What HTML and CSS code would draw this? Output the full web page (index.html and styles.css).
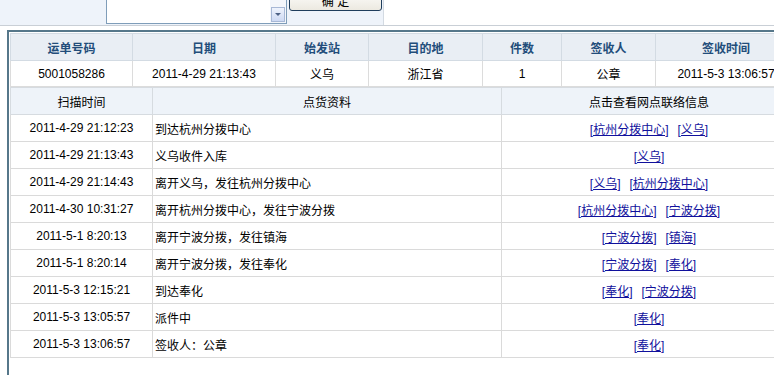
FILE: index.html
```html
<!DOCTYPE html>
<html lang="zh-CN">
<head>
<meta charset="utf-8">
<title>运单查询</title>
<link rel="stylesheet" href="styles.css">
</head>
<body>
<div class="topbar">
  <div class="formcell">
    <div class="memo">
      <div class="scroll"><div class="scroll-btn"><span class="arrow"></span></div></div>
    </div>
    <button class="okbtn" type="button">确 定</button>
  </div>
  <div class="restcell"></div>
</div>
<div class="panel">
  <table class="summary">
    <colgroup>
      <col class="w122"><col class="w143"><col class="w93"><col class="w114"><col class="w79"><col class="w94"><col class="w141">
    </colgroup>
    <tr>
      <th>运单号码</th><th>日期</th><th>始发站</th><th>目的地</th><th>件数</th><th>签收人</th><th>签收时间</th>
    </tr>
    <tr>
      <td>5001058286</td><td>2011-4-29 21:13:43</td><td>义乌</td><td>浙江省</td><td>1</td><td>公章</td><td>2011-5-3 13:06:57</td>
    </tr>
  </table>
  <table class="scans">
    <colgroup>
      <col class="w142"><col class="w349"><col class="w295">
    </colgroup>
    <tr><th>扫描时间</th><th>点货资料</th><th>点击查看网点联络信息</th></tr>
    <tr><td>2011-4-29 21:12:23</td><td class="info">到达杭州分拨中心</td><td class="links"><a href="#">[杭州分拨中心]</a><a href="#">[义乌]</a></td></tr>
    <tr><td>2011-4-29 21:13:43</td><td class="info">义乌收件入库</td><td class="links"><a href="#">[义乌]</a></td></tr>
    <tr><td>2011-4-29 21:14:43</td><td class="info">离开义乌，发往杭州分拨中心</td><td class="links"><a href="#">[义乌]</a><a href="#">[杭州分拨中心]</a></td></tr>
    <tr><td>2011-4-30 10:31:27</td><td class="info">离开杭州分拨中心，发往宁波分拨</td><td class="links"><a href="#">[杭州分拨中心]</a><a href="#">[宁波分拨]</a></td></tr>
    <tr><td>2011-5-1 8:20:13</td><td class="info">离开宁波分拨，发往镇海</td><td class="links"><a href="#">[宁波分拨]</a><a href="#">[镇海]</a></td></tr>
    <tr><td>2011-5-1 8:20:14</td><td class="info">离开宁波分拨，发往奉化</td><td class="links"><a href="#">[宁波分拨]</a><a href="#">[奉化]</a></td></tr>
    <tr><td>2011-5-3 12:15:21</td><td class="info">到达奉化</td><td class="links"><a href="#">[奉化]</a><a href="#">[宁波分拨]</a></td></tr>
    <tr><td>2011-5-3 13:05:57</td><td class="info">派件中</td><td class="links"><a href="#">[奉化]</a></td></tr>
    <tr><td>2011-5-3 13:06:57</td><td class="info">签收人：公章</td><td class="links"><a href="#">[奉化]</a></td></tr>
  </table>
</div>
</body>
</html>
```
FILE: styles.css
```css
html, body {
  margin: 0;
  padding: 0;
  overflow: hidden;
  background: #ffffff;
}
body {
  font-family: "Liberation Sans", "Noto Sans CJK SC", sans-serif;
  font-size: 12px;
  color: #000;
  width: 774px;
  height: 375px;
}

/* top form strip */
.topbar {
  display: flex;
  height: 25px;
  border-bottom: 1px solid #c9cfd6;
  overflow: hidden;
}
.formcell {
  width: 383px;
  flex: none;
  background: #eef3fa;
  border-right: 1px solid #d3dae2;
  display: flex;
  align-items: flex-start;
}
.restcell {
  flex: 1;
  background: #fff;
}
.memo {
  margin-left: 106px;
  margin-top: -12px;
  width: 179px;
  height: 34px;
  border: 1px solid #7f9db9;
  background: #fff;
  display: flex;
  justify-content: flex-end;
  align-items: flex-end;
  flex: none;
}
.scroll {
  width: 16px;
  height: 100%;
  background: #f3f6fb;
  display: flex;
  align-items: flex-end;
}
.scroll-btn {
  width: 14px;
  height: 15px;
  margin: 0 1px 1px 1px;
  border: 1px solid #a7b8d6;
  background: linear-gradient(#eef3fd, #cdd9f3);
  box-sizing: border-box;
  display: flex;
  align-items: center;
  justify-content: center;
}
.arrow {
  width: 0;
  height: 0;
  border-left: 3px solid transparent;
  border-right: 3px solid transparent;
  border-top: 3px solid #4d6185;
}
.okbtn {
  margin-left: 2px;
  margin-top: -11px;
  width: 93px;
  height: 22px;
  border: 1px solid #1f3d5c;
  border-radius: 3px;
  background: linear-gradient(#ffffff, #ece9e0);
  font-family: "Liberation Sans", "Noto Sans CJK SC", sans-serif;
  font-size: 12px;
  color: #000;
  padding: 0;
  flex: none;
}

/* main panel */
.panel {
  margin: 4px 0 0 7px;
  border-left: 2px solid #56778a;
  border-top: 2px solid #56778a;
  padding: 1px 0 0 1px;
  width: 800px;
  height: 360px;
}
table {
  border-collapse: collapse;
  table-layout: fixed;
  width: 787px;
}
th, td {
  padding: 0;
  text-align: center;
  white-space: nowrap;
  overflow: hidden;
  font-weight: normal;
}
.summary {
  border: 1px solid #d5d9dd;
}
.summary th {
  height: 26px;
  background: #e9eef4;
  color: #224d7a;
  font-weight: bold;
  border: 1px solid #d3dbe3;
}
.summary td {
  height: 25px;
  border: 1px solid #dcdcdc;
}
.scans {
  margin-top: 0;
  border: 1px solid #d5d9dd;
}
.scans th {
  height: 26px;
  background: #eef3f9;
  border: 1px solid #d6dbe0;
}
.scans td {
  height: 26px;
  border: 1px solid #dadada;
}
.scans td.info {
  text-align: left;
  padding-left: 2px;
}
.links a {
  color: #10109c;
  text-decoration: underline;
}
.links a + a {
  margin-left: 9px;
}

.w122 { width: 122px; }
.w143 { width: 143px; }
.w93 { width: 93px; }
.w114 { width: 114px; }
.w79 { width: 79px; }
.w94 { width: 94px; }
.w141 { width: 141px; }
.w142 { width: 142px; }
.w349 { width: 349px; }
.w295 { width: 295px; }
```
